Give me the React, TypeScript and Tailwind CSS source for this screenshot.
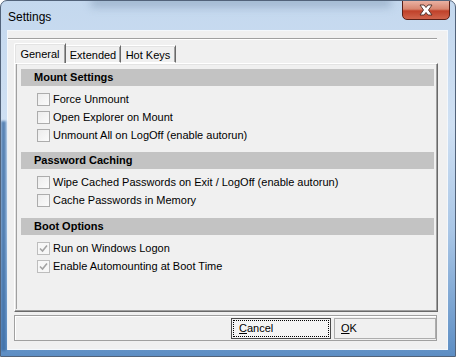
import React from 'react';

const font = { fontFamily: '"Liberation Sans", Arial, sans-serif' };

function Check({ checked, label }: { checked?: boolean; label: string }) {
  return (
    <div className="h-[18px] flex items-center pl-[20px]">
      <div
        className={`w-[13px] h-[13px] border flex items-center justify-center ${
          checked ? 'border-[#bdbdbd] bg-[#f7f7f7]' : 'border-[#acacac] bg-[linear-gradient(135deg,#ececec,#fbfbfb)]'
        }`}
      >
        {checked && (
          <svg width="9" height="9" viewBox="0 0 9 9">
            <path d="M1 4.5 L3.5 7 L8 1.5" fill="none" stroke="#a3a3a3" strokeWidth="1.6" />
          </svg>
        )}
      </div>
      <span className="ml-[3px] text-[11px] text-black leading-none">{label}</span>
    </div>
  );
}

function Section({ title, children, top }: { title: string; children: React.ReactNode; top: string }) {
  return (
    <div className={top}>
      <div className="h-[17px] ml-[4px] mr-[3px] bg-[#c3c3c3] flex items-center pl-[13px]">
        <span className="text-[11px] font-bold text-black leading-none">{title}</span>
      </div>
      <div className="pt-[4px]">{children}</div>
    </div>
  );
}

export default function App() {
  return (
    <div
      className="w-[456px] h-[357px] relative overflow-hidden rounded-t-[7px] border border-[#52637a] bg-[linear-gradient(180deg,#c4d8ee_0%,#cfe0f3_35%,#a9c6e6_65%,#5d8ec4_100%)]"
      style={font}
    >
      {/* blurred glass streaks */}
      <div className="absolute left-[90px] top-[-4px] w-[300px] h-[10px] bg-[#8fa6c0] blur-[4px] opacity-70" />
      <div className="absolute left-[0px] top-[120px] w-[5px] h-[230px] bg-[#3d6ea6] blur-[1px] opacity-80" />

      {/* title bar */}
      <div className="h-[29px] relative">
        <span className="absolute left-[7px] top-[7px] text-[12px] text-black">Settings</span>
        <div className="absolute right-[5px] top-[-1px] w-[48px] h-[20px] rounded-b-[5px] border border-[#5a2018] bg-[linear-gradient(180deg,#eab1a2_0%,#d88670_45%,#c0412a_55%,#d0644c_100%)] flex items-center justify-center">
          <svg width="16" height="12" viewBox="0 0 16 12">
            <path
              d="M2 1 H6 L8 3.5 L10 1 H14 L10.5 6 L14 11 H10 L8 8.5 L6 11 H2 L5.5 6 Z"
              fill="#ffffff"
              stroke="#4a2a24"
              strokeWidth="0.9"
            />
          </svg>
        </div>
      </div>

      {/* client area */}
      <div className="ml-[6px] mr-[7px] h-[320px] bg-[#f0f0f0] border border-[#f4f8fc] flex flex-col">
        <div className="mt-[7px] mr-[10px] border-t border-t-[#a0a0a0] border-b border-b-white" />

        {/* tabs */}
        <div className="mt-[3px] ml-[6px] flex items-end h-[20px] relative z-10 text-[11px]">
          <div className="w-[52px] h-[20px] border-l border-t border-l-white border-t-white border-r border-r-[#696969] shadow-[inset_1px_1px_0_#e3e3e3,inset_-1px_0_0_#a0a0a0] bg-[#f0f0f0] rounded-tl-[2px] flex items-start justify-center pt-[2px]">
            General
          </div>
          <div className="w-[55px] h-[18px] border-t border-t-white border-r border-r-[#696969] shadow-[inset_0_1px_0_#e3e3e3,inset_-1px_0_0_#a0a0a0] bg-[#f0f0f0] flex items-start justify-center pt-[1px] border-b border-b-white">
            Extended
          </div>
          <div className="w-[55px] h-[18px] border-t border-t-white border-r border-r-[#696969] shadow-[inset_0_1px_0_#e3e3e3,inset_-1px_0_0_#a0a0a0] bg-[#f0f0f0] flex items-start justify-center pt-[1px] border-b border-b-white">
            Hot Keys
          </div>
        </div>

        {/* tab panel */}
        <div className="ml-[6px] w-[424px] h-[249px] border-l border-t border-l-white border-t-white border-r border-b border-r-[#696969] border-b-[#696969] shadow-[inset_-1px_-1px_0_#a0a0a0,inset_1px_1px_0_#e3e3e3]">
          <div className="ml-[1px] h-[245px] border-l border-l-[#a0a0a0] pt-[5px]">
            <Section title="Mount Settings" top="">
              <Check label="Force Unmount" />
              <Check label="Open Explorer on Mount" />
              <Check label="Unmount All on LogOff (enable autorun)" />
            </Section>
            <Section title="Password Caching" top="mt-[8px]">
              <Check label="Wipe Cached Passwords on Exit / LogOff (enable autorun)" />
              <Check label="Cache Passwords in Memory" />
            </Section>
            <Section title="Boot Options" top="mt-[9px]">
              <Check checked label="Run on Windows Logon" />
              <Check checked label="Enable Automounting at Boot Time" />
            </Section>
          </div>
        </div>

        {/* button bar */}
        <div className="mt-[3px] ml-[6px] w-[423px] h-[26px] border border-[#a0a0a0] shadow-[inset_1px_1px_0_#ffffff] flex items-start justify-end pt-[2px] gap-[3px] text-[11px]">
          <div className="w-[100px] h-[21px] border border-[#4a4a4a] bg-[#f4f4f4] p-[1px]">
            <div className="w-full h-full border border-dotted border-black flex items-center pl-[5px]">
              <span>
                <span className="underline">C</span>ancel
              </span>
            </div>
          </div>
          <div className="w-[102px] h-[21px] border border-[#adadad] bg-[#f0f0f0] flex items-center pl-[6px]">
            <span>
              <span className="underline">O</span>K
            </span>
          </div>
        </div>
      </div>
    </div>
  );
}
